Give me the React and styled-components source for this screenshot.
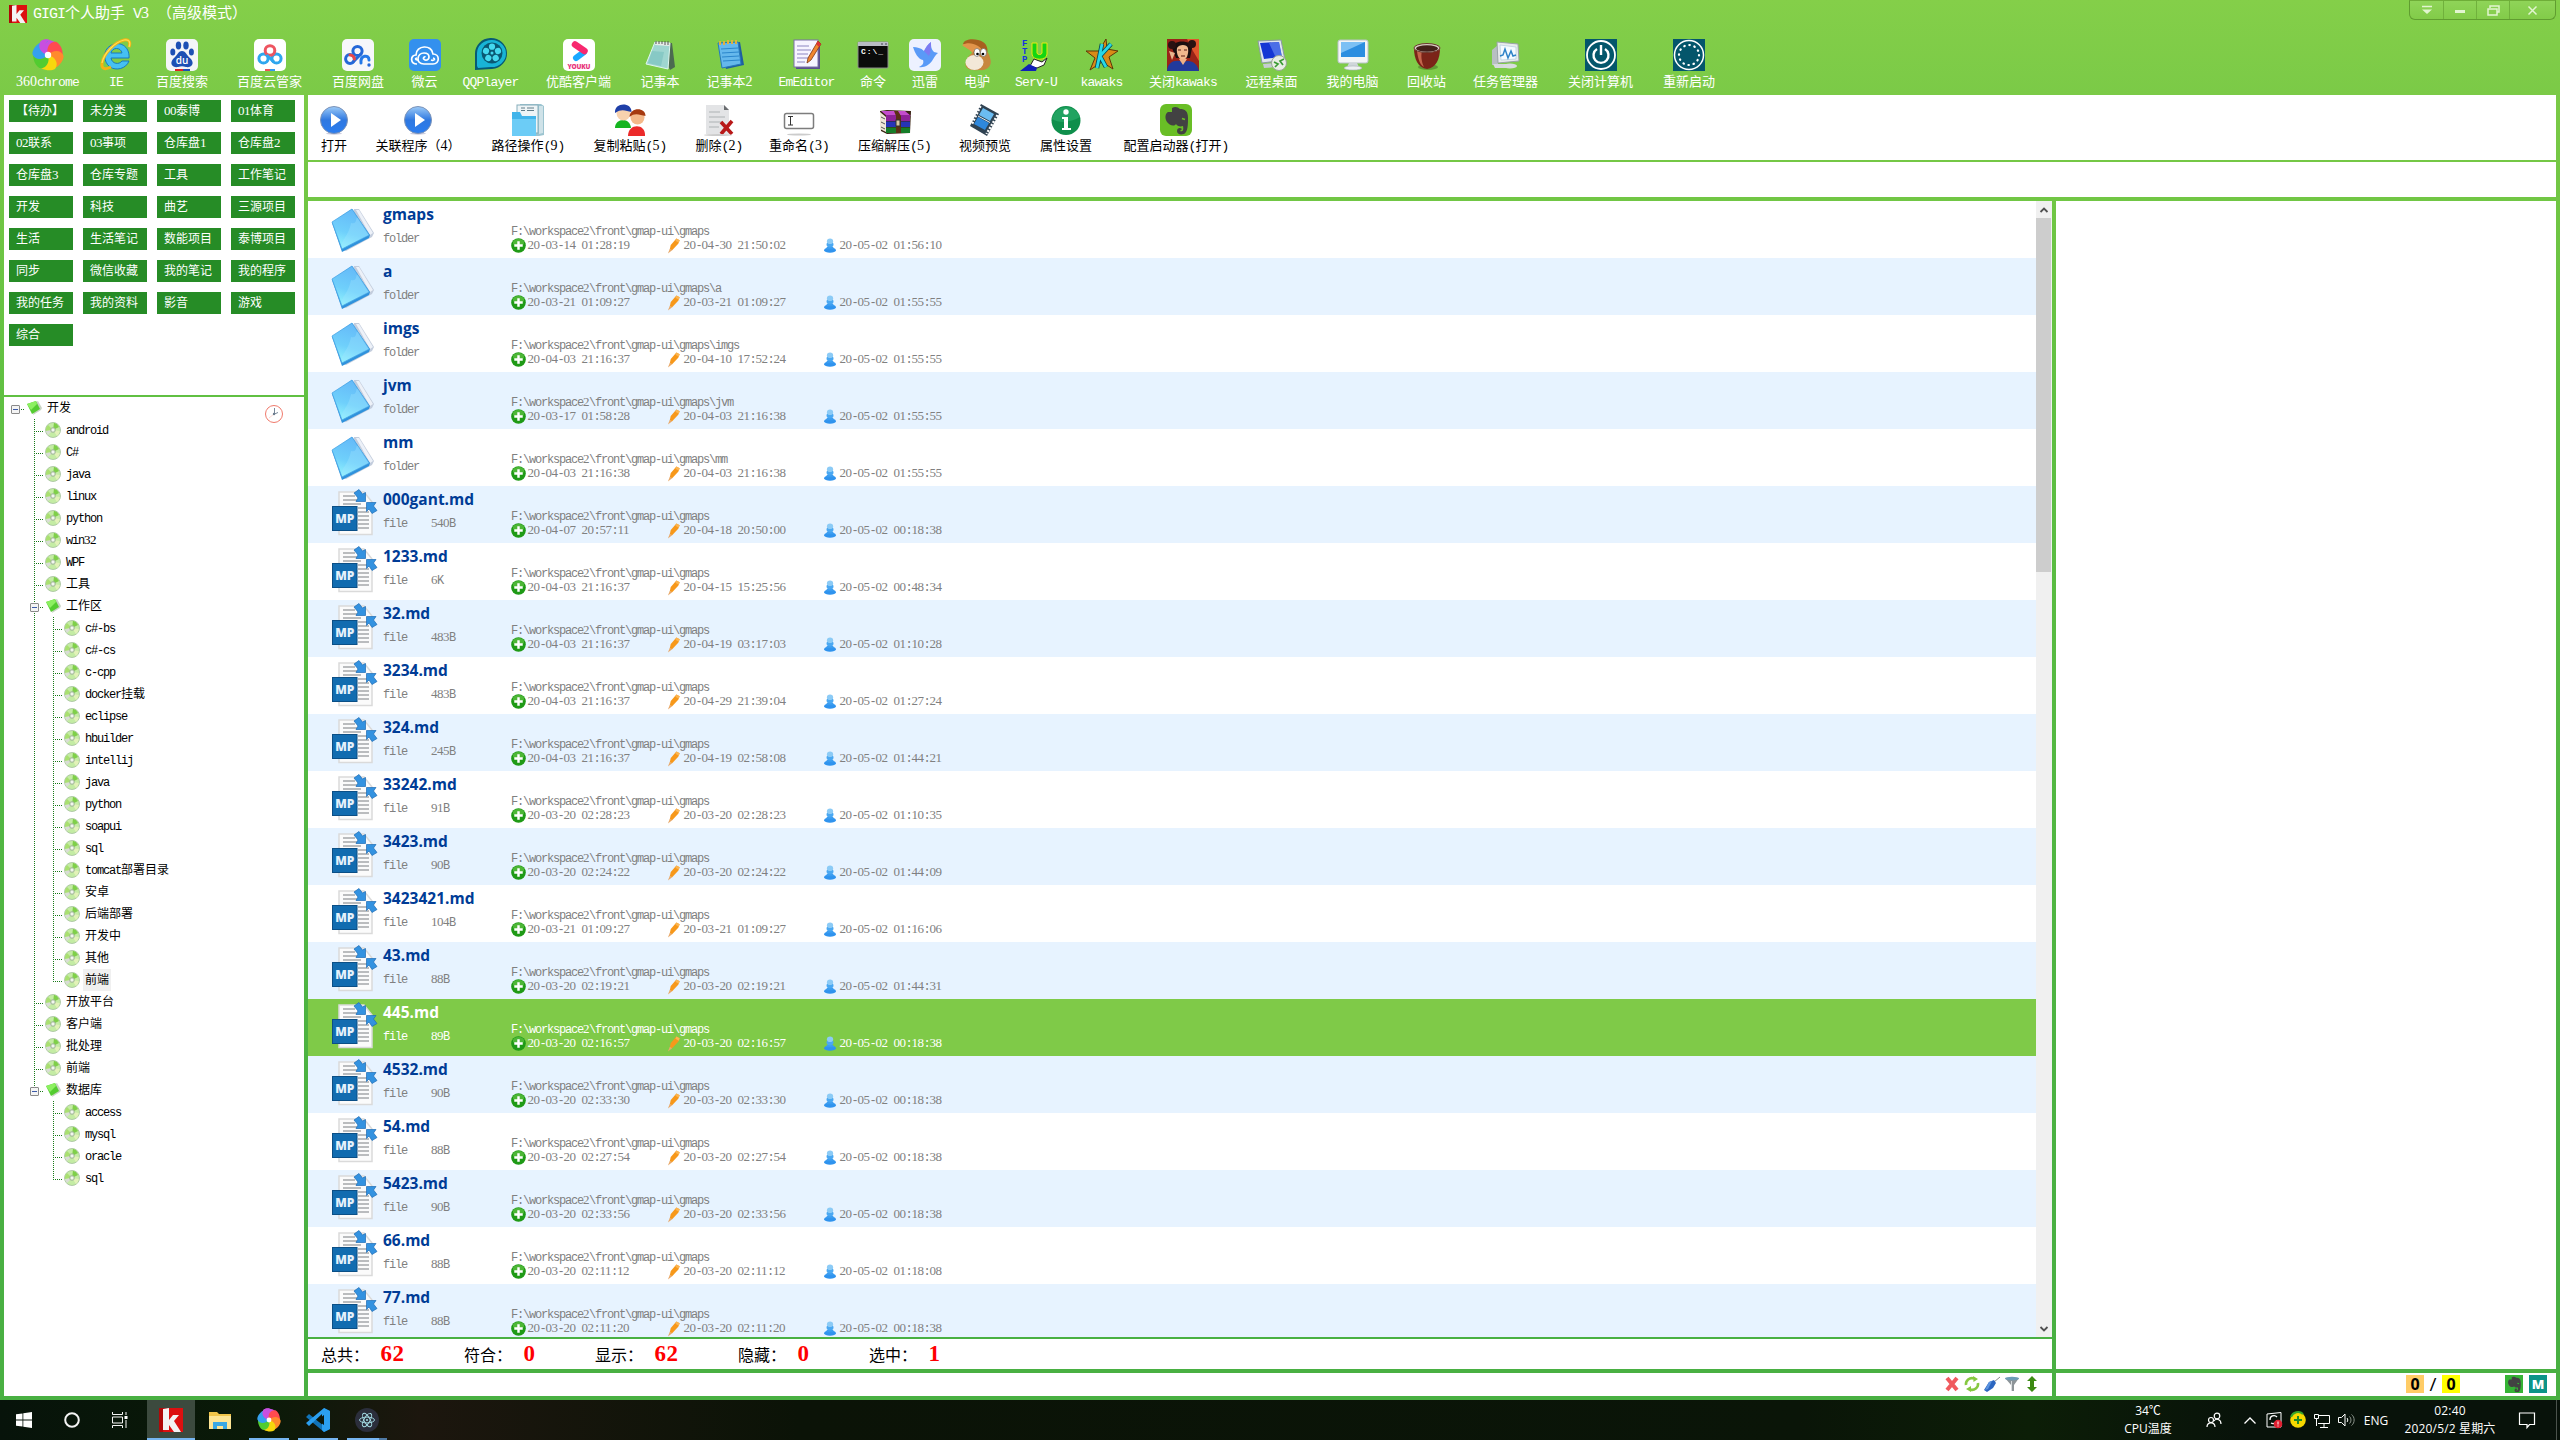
import React from "react";
import styled, { createGlobalStyle, css } from "styled-components";

const Global = createGlobalStyle`
  * { box-sizing: border-box; }
  html, body { margin: 0; padding: 0; }
  body { width: 2560px; height: 1440px; overflow: hidden; background: #071108; }
  svg { display: block; flex: none; overflow: visible; }
`;

const song = css`font-family: "Liberation Mono", "Noto Sans CJK SC", monospace;`;
const ui = css`font-family: "Open Sans", "Noto Sans CJK SC", sans-serif;`;

const Half = styled.span`letter-spacing: ${(p) => p.$ls}px;`;
const Digits = styled.span`font-family: "Liberation Serif", serif; font-size: ${(p) => p.$fs}px; line-height: 1; letter-spacing: ${(p) => p.$ls}px;`;
const LS = { 12: -1.2, 13: -0.8, 15: -1 };
const DIGIT_LS = { 12: -0.5, 13: 0, 15: 0 };
const Mixed = ({ size = 12, children }) =>
  String(children).split(/([0-9]+|[\x20-\x2f\x3a-\x7e]+)/).filter(Boolean).map((s, i) => {
    if (/[0-9]/.test(s[0])) return <Digits key={i} $fs={size + 1} $ls={DIGIT_LS[size]}>{s}</Digits>;
    if (/[\x20-\x7e]/.test(s[0])) return <Half key={i} $ls={LS[size]}>{s}</Half>;
    return <React.Fragment key={i}>{s}</React.Fragment>;
  });

/* ---------- icons ---------- */
const I = ({ s = 32, v = 32, w, h, children }) => (
  <svg width={w || s} height={h || s} viewBox={`0 0 ${v} ${v}`}>{children}</svg>
);

const Pinwheel = ({ s = 32 }) => {
  const c = ["#c84fe0", "#ff4b50", "#ff8a2c", "#f7d80d", "#52cc30", "#35a0ee"];
  const petal = "M16 16C8 14 5 7 9 2C14-1 25 1 28 9C21 6 16 9 16 16Z";
  return (
    <I s={s}>
      {c.map((f, i) => <path key={i} transform={`rotate(${i * 60} 16 16)`} d={petal} fill={f} />)}
      <path d="M16 16C8 14 5 7 9 2C11 .5 14 0 17 .5C12 4 12 11 16 16Z" fill={c[0]} />
      <circle cx="16" cy="16" r="3.2" fill="#fff" />
    </I>
  );
};
const IE = () => (
  <I>
    <path d="M29 19H11C12 25 19 26 22 22H29C26 30 16 32 10 28C3 23 3 11 10 7C19 1 30 7 29 19ZM11 14H22C21 8 12 8 11 14Z" fill="#45c0f2" stroke="#1878c0" strokeWidth="1" />
    <path d="M29 8C31 3 29 0 24 1C15 3 4 14 2 24C1 30 5 31 11 28" fill="none" stroke="#f2b414" strokeWidth="3" />
    <path d="M29 8C31 3 29 0 24 1C15 3 4 14 2 24" fill="none" stroke="#fde25a" strokeWidth="1.2" />
  </I>
);
const Tile = ({ fill = "#fff", children }) => (
  <I><rect width="32" height="32" rx="5" fill={fill} />{children}</I>
);
const BaiduPaw = () => (
  <Tile fill="#f4f5f8">
    <g fill="#1d50b4">
      <ellipse cx="12.5" cy="6.5" rx="2.7" ry="4" /><ellipse cx="20" cy="6.5" rx="2.7" ry="4" />
      <ellipse cx="6.8" cy="13" rx="2.5" ry="3.6" /><ellipse cx="25.4" cy="13" rx="2.5" ry="3.6" />
      <path d="M16 12C20 12 21 17 25 20C29 25 25 29 20 28C17 27 15 27 12 28C7 29 3 25 7 20C11 17 12 12 16 12Z" />
    </g>
    <text x="16" y="25" fontSize="10" textAnchor="middle" fill="#fff" fontFamily="Open Sans, sans-serif" fontWeight="600">du</text>
    <rect x="9" y="30" width="8" height="2" fill="#d22" /><rect x="17" y="30" width="7" height="2" fill="#1d50b4" />
  </Tile>
);
const BaiduCloud = () => (
  <Tile>
    <g fill="none" strokeWidth="3">
      <circle cx="9.5" cy="19.5" r="4.6" stroke="#2fa6ee" /><circle cx="22.5" cy="19.5" r="4.6" stroke="#2fa6ee" />
      <circle cx="16" cy="11.5" r="4.8" stroke="#ee5560" /><path d="M12.5 16L20 23" stroke="#2fa6ee" />
    </g>
    <rect x="11" y="30" width="5" height="2" fill="#e55" /><rect x="16" y="30" width="5" height="2" fill="#39e" />
  </Tile>
);
const BaiduPan = () => (
  <Tile fill="#f6f7fa">
    <g fill="none" strokeWidth="3" strokeLinecap="round">
      <circle cx="8" cy="20" r="4.4" stroke="#2468d8" /><circle cx="15.5" cy="12" r="4.6" stroke="#2468d8" />
      <path d="M19 15L11 23" stroke="#2468d8" /><path d="M19 24C18 16 27 15 27 21" stroke="#2479e8" />
      <path d="M8 16A4.400 4.400 0 0 1 12.400 20" stroke="#ea4646" />
    </g>
    <circle cx="27" cy="26" r="1.700" fill="#2468d8" />
  </Tile>
);
const Weiyun = () => (
  <Tile fill="#3390ee">
    <g fill="none" stroke="#fff" strokeWidth="1.700">
      <path d="M8 25C1 25 1 16 7 16C7 6 23 5 24 15C31 15 31 25 24 25H15C6 25 8 14 15 14C22 14 21 22 16 21C13 20 15 17 16.500 18" />
      <path d="M9 21C6 21 6 19 8 19M24 19C27 20 25 22 22 21" />
    </g>
  </Tile>
);
const QQPlayer = () => (
  <I>
    <path d="M0 31V15A16 15.500 0 1 1 17 30Z" fill="#075a75" />
    <path d="M2 27V14A14.500 13.500 0 1 1 16 28L3 29Z" fill="#18b4d6" />
    <circle cx="17" cy="14" r="10.500" fill="#0a5873" />
    {[0, 72, 144, 216, 288].map((a) => <circle key={a} cx="17" cy="7.700" r="3.100" fill="#45d8ef" transform={`rotate(${a} 17 14)`} />)}
    <circle cx="17" cy="14" r="1.500" fill="#45d8ef" />
  </I>
);
const Youku = () => (
  <Tile>
    <path d="M13 19L21 13" stroke="#18a8ff" strokeWidth="6" strokeLinecap="round" />
    <path d="M12 5.500L21.500 12" stroke="#f8286f" strokeWidth="6.500" strokeLinecap="round" />
    <text x="16" y="29.500" fontSize="6.500" textAnchor="middle" fill="#e8357c" fontFamily="Open Sans, sans-serif" fontWeight="800" textLength="23">YOUKU</text>
  </Tile>
);
const Notepad = () => (
  <I>
    <path d="M12 3L28 4L31 28L26 31Z" fill="#4b6a50" />
    <path d="M11 3L26 4L24 30L2 25Z" fill="#9fd6d0" stroke="#dff5ee" />
    <path d="M12 3L26 4L25.500 7L11 6Z" fill="#e8ece8" />
    <path d="M12 2V5M15 2V5M18 2V5M21 2V6M24 2V6" stroke="#555" />
    <path d="M8 12L20 13L17 27L4 24Z" fill="#6fbcb9" opacity=".5" />
  </I>
);
const Notepad2 = () => (
  <I>
    <path d="M6 4L26 3L30 26L12 30Z" fill="#1f5fa0" />
    <path d="M4 4L24 3L27 25L8 29Z" fill="#65b8ec" stroke="#2679ba" />
    <path d="M7 10L24 9M8 14L25 13M8 18L25 17M9 22L26 21" stroke="#2a86cc" />
    <path d="M6 2V6M10 2V6M14 1V5M18 1V5M22 1V5" stroke="#e0b040" strokeWidth="2" />
  </I>
);
const EmEditor = () => (
  <I>
    <rect x="5" y="3" width="24" height="27" fill="#5a4f8c" /><rect x="3" y="1" width="24" height="27" fill="#f6f4ff" stroke="#7a70a8" />
    <path d="M6 7H18M6 11H20M6 15H17M6 19H18M6 23H14" stroke="#8c86c0" />
    <path d="M27 2L30 5L20 21L16 24L17 19Z" fill="#f1872e" stroke="#7c3410" strokeWidth=".8" /><path d="M27 2L30 5L28 8L25 5Z" fill="#d33" />
  </I>
);
const Cmd = () => (
  <I>
    <rect x="1" y="3" width="30" height="26" rx="1" fill="#0b0b0b" stroke="#8b8b8b" /><rect x="1" y="3" width="30" height="4" fill="#b9bcc4" />
    <path d="M24 5H26M28 5H30" stroke="#445" />
    <text x="4" y="15" fontSize="8" fill="#fff" fontFamily="Liberation Mono, monospace" fontWeight="700" textLength="22">C:\_</text>
  </I>
);
const Xunlei = () => (
  <Tile fill="#edf1ff">
    <path d="M4 8C8 8 12 9 15 12C17 8 19 5 22 3C22 7 22 10 25 13L29 14C26 16 25 19 23 22C20 26 15 29 10 28C14 26 15 24 14 21C9 20 6 14 4 8Z" fill="#5a9af7" />
    <path d="M15 12C17 8 19 5 22 3C22 8 22 12 20 17Z" fill="#8c6df0" opacity=".7" />
  </Tile>
);
const Donkey = () => (
  <I>
    <path d="M2 5C3-1 16-1 22 3C27 6 27 12 26 16L17 15C15 8 9 8 2 5Z" fill="#a8601f" />
    <path d="M1 6C8 2 19 5 23 14L13 17C11 11 6 10 1 6Z" fill="#e2944a" />
    <path d="M13 12C18 8 28 10 29 19C32 27 26 32 18 31C8 32 3 29 5 23C6 18 9 16 13 12Z" fill="#c7873f" />
    <ellipse cx="13.500" cy="23.500" rx="9" ry="7.500" fill="#f3e8d8" />
    <ellipse cx="16" cy="13.500" rx="3" ry="4" fill="#fff" stroke="#555" strokeWidth=".6" /><ellipse cx="22.500" cy="13.500" rx="3" ry="4" fill="#fff" stroke="#555" strokeWidth=".6" />
    <circle cx="16.500" cy="15" r="1.300" /><circle cx="22" cy="15" r="1.300" />
  </I>
);
const ServU = () => (
  <I>
    <g fontFamily="Liberation Mono, monospace" fontWeight="700" fontSize="9" fill="#1433e0">
      <text x="2" y="7">F</text><text x="2" y="15">T</text><text x="2" y="23">P</text>
    </g>
    <path d="M12 4H17V14C17 16 22 16 22 14V4H27V15C27 22 12 22 12 15Z" fill="#12d612" stroke="#e8e812" />
    <path d="M10 27L14 20L22 23L27 19L24 26L17 29Z" fill="#fff" stroke="#222" /><path d="M0 32L9 25L17 29L16 32Z" fill="#1020b8" />
  </I>
);
const Kawaks = () => (
  <I>
    <path d="M20 0L21 10L32 12L23 18L27 30L16 23L4 31L9 19L0 12H13Z" fill="#d98b16" stroke="#5f3608" />
    <path d="M16 5L11 29M25 5L14 17L20 28" stroke="#064a58" strokeWidth="4.500" fill="none" /><path d="M16 5L11 29M25 5L14 17L20 28" stroke="#28d8e6" strokeWidth="2.800" fill="none" />
  </I>
);
const Fighter = () => (
  <I>
    <rect width="32" height="32" fill="#9a2418" /><path d="M20 0H32V22L26 12Z" fill="#e0562c" />
    <path d="M5 9C5 1 24 0 25 9L23 19H9Z" fill="#1a0f10" /><circle cx="5" cy="6" r="4" fill="#2a1212" /><circle cx="25" cy="5" r="4" fill="#2a1212" />
    <path d="M10 9C12 5 20 5 21 9C22 16 19 21 16 21C12 21 9 15 10 9Z" fill="#f0b98e" />
    <path d="M0 32C1 22 9 20 16 23C24 20 30 24 32 32Z" fill="#223a9c" /><path d="M12 20L16 26L20 20Z" fill="#efb186" /><path d="M11 11H14M17 11H20M14 17H18" stroke="#5a1c12" />
    <path d="M2 12L5 21L8 14Z" fill="#e9b58e" />
  </I>
);
const RemoteDesk = () => (
  <I>
    <path d="M2 2L25 1L29 21L6 24Z" fill="#dfe6ee" stroke="#8c99a6" /><path d="M4 4L23 3L26 18L8 20Z" fill="#1536d4" /><path d="M13 4L23 3L26 18L20 19Z" fill="#6f95f4" opacity=".6" />
    <path d="M7 25L20 24L21 28L8 29Z" fill="#c5ccd2" /><circle cx="23" cy="24" r="7.500" fill="#e9eee4" stroke="#9aa596" /><path d="M18 23L22 25L19 28M28 20L24 22L27 26" stroke="#3b9a34" strokeWidth="1.700" fill="none" />
  </I>
);
const MyPC = () => (
  <I>
    <rect x="1" y="1" width="30" height="23" rx="2" fill="#f3f5f6" stroke="#b8c2c8" /><rect x="4" y="3" width="24" height="15" fill="#2c8ee0" /><path d="M4 3H28L4 14Z" fill="#7cc0f4" />
    <path d="M12 24H20L22 28H10Z" fill="#cfd6da" /><ellipse cx="16" cy="29" rx="9" ry="2" fill="#eef1f2" stroke="#aab4b8" strokeWidth=".6" />
  </I>
);
const Bin = () => (
  <I>
    <ellipse cx="17" cy="28" rx="10" ry="3" fill="#4f7a28" opacity=".6" /><path d="M3 9C3 20 7 29 16 30C25 29 29 20 29 9Z" fill="#7b2418" />
    <path d="M6 12C7 20 9 26 13 28C10 22 10 15 11 12Z" fill="#c4664c" /><ellipse cx="16" cy="9" rx="13" ry="4.500" fill="#d8ccc4" stroke="#6b3a2e" /><ellipse cx="16" cy="9.500" rx="11" ry="3.300" fill="#43201a" />
  </I>
);
const TaskMgr = () => (
  <I>
    <path d="M2 11L8 6V26L2 26Z" fill="#b8bfc2" /><path d="M3 25H17V29H5Z" fill="#d6dadc" /><path d="M7 3L28 5L29 22L8 24Z" fill="#e8ebed" stroke="#9aa3a8" /><path d="M10 6L26 8L26 20L11 21Z" fill="#f5fbff" stroke="#a8c6d8" strokeWidth=".6" />
    <path d="M10 17L13 16L15 10L18 19L21 12L23 17L26 16" stroke="#2c82c8" strokeWidth="1.500" fill="none" /><ellipse cx="20" cy="27" rx="7" ry="2.500" fill="#d9dddf" />
  </I>
);
const Power = () => (
  <I><rect width="32" height="32" fill="#04566b" /><g fill="none" stroke="#fff"><circle cx="16" cy="16" r="14" strokeWidth="1.800" /><path d="M12 10A7.500 7.500 0 1 0 20 10M16 6V16" strokeWidth="2.400" /></g></I>
);
const Restart = () => (
  <I><rect width="32" height="32" fill="#04566b" /><g fill="none" stroke="#fff"><circle cx="16" cy="16" r="14.500" strokeWidth="1.500" /><circle cx="16" cy="16" r="10" strokeWidth="2.200" strokeDasharray="0.5 4.740" strokeLinecap="round" /></g></I>
);
const Logo = ({ w = 18, h = 18 }) => (
  <svg width={w} height={h} viewBox="0 0 24 24"><rect width="24" height="24" fill="#dc1010" /><path d="M0 0H8L4 24H0Z" fill="#b00808" /><path d="M4 1L10 0V12L14 7H20L15 13L22 24H15L10 17V22H4Z" fill="#f3f3f3" /></svg>
);

const Play = () => (
  <I>
    <defs><linearGradient id="pl" x1="0" y1="0" x2="0" y2="1"><stop offset="0" stopColor="#9ccbf8" /><stop offset=".5" stopColor="#2f78e0" /><stop offset="1" stopColor="#2a7df0" /></linearGradient></defs>
    <ellipse cx="16" cy="29.500" rx="8" ry="1.200" fill="#ccd" /><circle cx="16" cy="16" r="13.500" fill="url(#pl)" stroke="#7c93b8" /><path d="M13 9L23 16L13 23Z" fill="#fff" />
  </I>
);
const PathOp = () => (
  <I>
    <path d="M8 0H29L32 2V31L27 32H8Z" fill="#9cc4d0" /><path d="M27 2H31V29L27 30Z" fill="#cfe2e8" /><rect x="5" y="1" width="21" height="28" fill="#eef4f6" stroke="#86aebb" /><path d="M9 4H13M15 4H22M9 6.500H13M15 6.500H22" stroke="#607c88" />
    <path d="M0 8H8L10 12H24V32H0Z" fill="#41b4ea" /><path d="M0 15H24V32H0Z" fill="#6cccf6" />
  </I>
);
const People = () => (
  <I>
    <path d="M1 24C1 14 16 13 17 24Z" fill="#15b520" /><ellipse cx="9.500" cy="9" rx="7" ry="7.500" fill="#f8d2ae" /><path d="M1 9C0-2 18-2 17.500 8C12 7 8 4 1 9Z" fill="#1f3fa8" />
    <path d="M14 32C14 19 32 19 31 32Z" fill="#ec2a2a" /><ellipse cx="23.500" cy="13.500" rx="7" ry="7" fill="#f4b98a" /><path d="M15.500 13C16 3 31.500 3 31.500 12C26 11 21 8 15.500 13Z" fill="#a63a10" />
  </I>
);
const Del = () => (
  <I>
    <path d="M3 1H21L26 6V30H3Z" fill="#e3e4e6" /><path d="M21 1L26 6H21Z" fill="#6a6d70" /><path d="M6 8H17M6 13H22M6 18H20M6 23H16" stroke="#c0c2c5" strokeWidth="1.500" />
    <path d="M18 18L29 30M29 17L18 30" stroke="#b81818" strokeWidth="3.600" /><ellipse cx="15" cy="31" rx="14" ry="1" fill="#ccc" />
  </I>
);
const Rename = () => (
  <I><rect x="1.500" y="9.500" width="29" height="15" rx="2" fill="#fff" stroke="#7d7d7d" strokeWidth="1.500" /><path d="M5 12.500H10M7.500 12.500V21M5 21H10" stroke="#333" /><ellipse cx="16" cy="30.500" rx="12" ry="1" fill="#ccc" /></I>
);
const Rar = () => (
  <I>
    <path d="M1 7L8 6L32 7L31 29L8 30L2 27Z" fill="#392312" /><path d="M1 8L7 13V28L1 25Z" fill="#efe7d8" />
    <path d="M2 7H26L32 12H8Z" fill="#c44ccc" /><rect x="7" y="11" width="24" height="6" fill="#8e2298" /><rect x="7" y="17.500" width="24" height="5.500" fill="#2634b8" /><rect x="7" y="23.500" width="24" height="5.500" fill="#167d28" />
    <path d="M15 7H19L22 12V29H17V12Z" fill="#5a3015" /><rect x="17" y="16" width="4" height="6" fill="#d8c8a4" stroke="#333" /><path d="M2 13L6 15M2 18L6 20M2 23L6 25" stroke="#555" />
  </I>
);
const Film = () => (
  <I>
    <path d="M12 0L30 10L18 32L1 22Z" fill="#2f4252" /><path d="M14 4L25 10L21 17L10 11Z" fill="#6bbcf2" /><path d="M9 13L20 19L16 26L5 20Z" fill="#2f88dc" />
    <path d="M11.500 2L2.500 21" stroke="#fff" strokeWidth="2.400" strokeDasharray="2 1.500" /><path d="M28.500 11L17.500 30" stroke="#fff" strokeWidth="2.400" strokeDasharray="2 1.500" /><path d="M9 12L21 18.500" stroke="#e6eef4" />
  </I>
);
const Info = () => (
  <I><circle cx="16" cy="16.500" r="14.500" fill="#0f8f4c" /><path d="M2 15A14.500 14.500 0 0 1 30 13C22 18 10 20 2 15Z" fill="#2db070" opacity=".6" /><circle cx="16" cy="8" r="2.700" fill="#fff" /><path d="M12 13H18V24H21V26H12V24H14V15H12Z" fill="#fff" /></I>
);
const Elephant = ({ s = 32, bg = "#69be26", r = 6 }) => (
  <I s={s}><rect width="32" height="32" rx={r} fill={bg} />
    <path d="M12 4C15 2 18 3 20 5C25 5 28 7 28 14C28 20 28 28 24 30C20 31 17 30 17 27C17 24 20 23 22 25L20 27C22 28 24 27 23 22C20 23 17 22 16 20C14 23 9 21 7 18C4 13 6 9 8 8L12 8Z" fill="#424242" />
    <path d="M22 14.500L25 15.500" stroke={bg} strokeWidth="1.800" />
  </I>
);

const FolderBig = () => (
  <svg width="46" height="44" viewBox="0 0 46 44">
    <defs><linearGradient id="fb" x1=".6" y1="0" x2=".3" y2="1"><stop offset="0" stopColor="#64b8f8" /><stop offset=".6" stopColor="#6fd0fb" /><stop offset="1" stopColor="#93f4fd" /></linearGradient></defs>
    <path d="M24 0L29 0L44 24L42 28L16 42L13 41Z" fill="#c3cddd" /><path d="M26 1L29 1L43 24L40 26Z" fill="#edf1f8" />
    <path d="M2 14L22 0L40 26L39 29L12 43Z" fill="#2f92dc" /><path d="M2 13L22 0L39 26L12 40Z" fill="url(#fb)" stroke="#4aa6e6" strokeWidth=".8" />
    <path d="M21 14C28 16 25 7 28 9L39 26L12 39C10 31 18 29 21 14Z" fill="#a6e6ff" opacity=".32" />
  </svg>
);
const MdFile = () => (
  <svg width="46" height="48" viewBox="0 0 46 48">
    <path d="M8 3H33L41 13V45.500H8Z" fill="#fbfbfb" stroke="#dadada" strokeWidth="1.500" />
    <path d="M12 7H24M12 11H26M12 15H30M27 19H38M27 23H38M27 27H38M27 31H38M27 35H38M27 39H38" stroke="#a5a8aa" strokeWidth="1.600" />
    <rect x="1.500" y="17.500" width="24.500" height="24" fill="#126cb0" stroke="#0b4f86" />
    <text x="13.800" y="34" fontSize="12" textAnchor="middle" fill="#e4f1fb" fontFamily="Open Sans, sans-serif" fontWeight="800" textLength="19">MP</text>
    <path d="M23 4L28 .500L31.500 5L34.500 3.500V12.500H25L27 9Z" fill="#3392e0" stroke="#1c6cb4" strokeWidth=".7" />
    <path d="M35.500 13.500H45L42.500 17L46 21.500L41 24.500L38 20L35.500 22.500Z" fill="#3392e0" stroke="#1c6cb4" strokeWidth=".7" />
  </svg>
);
const Plus = () => (
  <I s={15} v={16}><circle cx="8" cy="8" r="7.800" fill="#1f9a16" /><ellipse cx="8" cy="5" rx="6" ry="4" fill="#6ccc4c" opacity=".6" /><path d="M8 3.500V12.500M3.500 8H12.500" stroke="#fff" strokeWidth="2.600" /></I>
);
const Pencil = () => (
  <I s={15} v={16}><path d="M10 .500L13.500 2.500L12 6L5.500 13L3 12L4 7.500Z" fill="#f7981a" /><path d="M10 .500L13.500 2.500L12.500 5L9 3Z" fill="#fbb552" /><path d="M3 11.500L5.500 13L1 16.500Z" fill="#e8a868" /></I>
);
const Visitor = () => (
  <I s={15} v={16}><ellipse cx="7.500" cy="13" rx="6.300" ry="2.800" fill="#2f93ee" /><path d="M3 12C4 7 11 7 12 12Z" fill="#3a9cf0" /><ellipse cx="7.500" cy="7" rx="3.700" ry="3" fill="#4aa8f2" /><ellipse cx="7.500" cy="3.500" rx="3.300" ry="3" fill="#8ccbf6" /></I>
);
const Disc = () => (
  <I s={16} v={16}><circle cx="8" cy="8" r="7.500" fill="#c4ecA4" stroke="#a3bf9c" strokeWidth=".8" /><path d="M8 8L9 .8A7 7 0 0 1 14 5Z" fill="#7fcf4a" /><path d="M8 8L1 9A7 7 0 0 1 3 3Z" fill="#a9e070" /><path d="M8 8L3 13A7 7 0 0 1 1 9Z" fill="#d9dcd6" /><path d="M8 8L14.800 9A7 7 0 0 1 12 14Z" fill="#e2f2b8" /><circle cx="8" cy="8" r="2.400" fill="#d6e4cf" stroke="#93a88c" strokeWidth=".7" /><circle cx="8" cy="8" r=".9" fill="#fff" /></I>
);
const Book = () => (
  <I s={16} v={16}><path d="M10 2L12 1L16 8L15 10L7 15Z" fill="#c9d4c4" /><path d="M1 4L10 1L14 9L6 14Z" fill="#54cc30" /><path d="M1 4L10 1L11 4L5 10Z" fill="#8cf060" /></I>
);
const Clock = () => (
  <I s={20} v={20}><circle cx="10" cy="10" r="8.500" fill="#fff" stroke="#f07a6c" /><path d="M10.500 4V10L14 8.500" stroke="#7a8a9a" fill="none" /><path d="M10 10L5 14" stroke="#f6c8c0" strokeWidth=".7" /><circle cx="10" cy="10" r="1.200" fill="#6a7a8c" /></I>
);

/* ---------- window shell ---------- */
const Screen = styled.div`
  ${song} width: 2560px; height: 1440px; display: flex; flex-direction: column; font-size: 12px; color: #000; overflow: hidden;
`;
const Window = styled.div`
  height: 1400px; display: flex; flex-direction: column; padding: 0 4px 4px;
  background: linear-gradient(#84cf49 0, #7bca47 95px, #70c644 210px, #60c042 400px, #52b742 800px, #49b042 1200px, #49b042 1400px);
`;
const Header = styled.header`height: 95px; display: flex; flex-direction: column; margin: 0 -4px;`;
const TitleBar = styled.div`height: 39px; display: flex; justify-content: space-between; padding: 0 4px 0 9px;`;
const Title = styled.div`
  display: flex; gap: 6px; padding-top: 5px; height: 24px; color: #fff; font-size: 15px; line-height: 18px; white-space: pre;
`;
const Caption = styled.div`
  display: flex; width: 147px; height: 20px; border: 1px solid #609d30; border-top-color: #6fae38; border-radius: 0 0 6px 6px; background: linear-gradient(#8fd458, #82cb49);
`;
const CaptionBtn = styled.div`
  width: ${(p) => p.$w}px; display: flex; align-items: center; justify-content: center;
  & + & { border-left: 1px solid #70b13c; }
`;
const Launcher = styled.nav`display: flex; height: 56px;`;
const Tool = styled.div`
  width: ${(p) => p.$w}px; margin-left: ${(p) => p.$gap}px; display: flex; flex-direction: column; align-items: center; flex: none;
`;
const ToolLabel = styled.span`
  font-size: 13px; line-height: 18px; height: 18px; margin-top: ${(p) => (p.$dark ? 2 : 3)}px; white-space: nowrap; color: ${(p) => (p.$dark ? "#000" : "#fff")};
`;

const Body = styled.div`flex: 1; min-height: 0; display: flex; gap: 4px;`;
const Side = styled.aside`width: 300px; display: flex; flex-direction: column; gap: 2px;`;
const Tags = styled.div`
  height: 300px; background: #fff; padding: 5px 0 0 5px; display: grid; grid-template-columns: repeat(4, 64px); grid-auto-rows: 22px; gap: 10px; align-content: start;
`;
const Tag = styled.div`background: #268c26; color: #fff; height: 22px; padding-left: 7px; line-height: 24px; white-space: nowrap;`;
const Tree = styled.div`flex: 1; background: #fff; position: relative; padding-left: 2px;`;
const TreeRow = styled.div`height: 22px; display: flex; align-items: center;`;
const dotsV = "repeating-linear-gradient(180deg, #187a18 0 1px, transparent 1px 2px)";
const dotsH = "repeating-linear-gradient(90deg, #187a18 0 1px, transparent 1px 2px)";
const Guide = styled.div`
  width: 19px; height: 22px; display: flex; align-items: center; justify-content: center; flex: none;
  background-repeat: no-repeat;
  background-image: ${(p) => (p.$v ? dotsV : "none")}, ${(p) => (p.$h ? dotsH : "none")};
  background-position: 9px 0, 9px 12px;
  background-size: 1px ${(p) => (p.$end ? 12 : 22)}px, 11px 1px;
`;
const Toggle = styled.div`
  width: 9px; height: 9px; margin-top: 2px; border: 1px solid #8a8a8a; border-radius: 1px; background: #f4f4f4; display: flex; align-items: center; justify-content: center;
  &::after { content: ""; width: 5px; height: 1px; background: #3c5aa8; }
`;
const NodeIcon = styled.div`width: 16px; margin: 0 3px 0 1px; flex: none;`;
const NodeText = styled.span`padding: 0 2px; height: 22px; line-height: 24px; white-space: nowrap; background: ${(p) => (p.$on ? "#f0f0f0" : "transparent")};`;
const ClockSpot = styled.div`position: absolute; left: 260px; top: 7px;`;

const Main = styled.main`flex: 1; display: flex; flex-direction: column;`;
const Toolbar = styled.div`height: 65px; background: #fff; display: flex; padding-top: 9px; margin-bottom: 2px;`;
const FilterBar = styled.div`height: 35px; background: #fff; margin-bottom: 4px;`;
const Split = styled.div`flex: 1; min-height: 0; display: flex; gap: 4px;`;
const ListCol = styled.section`width: 1744px; display: flex; flex-direction: column;`;
const PreviewCol = styled.section`width: 500px; display: flex; flex-direction: column; gap: 4px;`;
const Preview = styled.div`flex: 1; background: #fff;`;
const ListView = styled.div`height: 1136px; display: flex; background: #fff; overflow: hidden;`;
const Rows = styled.div`flex: 1; overflow: hidden;`;
const Scroll = styled.div`width: 16px; background: #f0f0f0; display: flex; flex-direction: column; align-items: center;`;
const ScrollBtn = styled.div`height: 17px; display: flex; align-items: center;`;
const Thumb = styled.div`width: 15px; height: 354px; background: #cdcdcd; margin-right: 1px; margin-bottom: auto;`;
const Row = styled.div`
  height: 57px; display: flex; color: ${(p) => (p.$sel ? "#fff" : "#808080")};
  background: ${(p) => (p.$sel ? "#7fca48" : p.$alt ? "#e7f3ff" : "#fff")};
`;
const RowIcon = styled.div`width: 75px; padding: ${(p) => (p.$file ? 3 : 8)}px 0 0 ${(p) => (p.$file ? 23 : 22)}px;`;
const RowName = styled.div`width: 128px; padding-top: 2px;`;
const Name = styled.div`${ui} font-size: 15.5px; font-weight: 700; line-height: 22px; white-space: nowrap; color: ${(p) => (p.$sel ? "#fff" : "#003c96")};`;
const Kind = styled.div`display: flex; align-items: baseline; line-height: 16px; height: 16px; margin-top: 6px;`;
const KindType = styled.span`width: 48px;`;
const RowInfo = styled.div`padding-top: 23px;`;
const PathLine = styled.div`line-height: 15px; height: 14px; white-space: nowrap;`;
const Dates = styled.div`display: flex; align-items: flex-start;`;
const DateCell = styled.div`width: 156px; height: 16px; display: flex; gap: 1.5px; line-height: 16px; white-space: nowrap;`;
const Status = styled.div`
  height: 30px; margin: 2px 0 4px; background: #fff; display: flex; align-items: center; gap: 59.5px; padding-left: 13px; font-size: 16px; white-space: nowrap;
`;
const Stat = styled.div`display: flex; align-items: center; gap: 11.5px;`;
const StatLabel = styled.span`width: 48px;`;
const StatNum = styled.b`font-family: "Liberation Serif", serif; font-size: 23px; line-height: 30px; letter-spacing: .5px; color: #f00;`;
const FootBar = styled.div`height: 23px; flex: none; background: #fff; display: flex; align-items: center; justify-content: flex-end; gap: ${(p) => p.$gap || 0}px; padding-right: ${(p) => p.$pr}px; padding-bottom: 2px;`;
const Count = styled.div`${ui} width: 18px; height: 18px; line-height: 18px; font-size: 16px; font-weight: 700; text-align: center; background: ${(p) => p.$bg};`;
const Slash = styled.span`${ui} width: 18px; text-align: center; font-size: 19px; line-height: 18px;`;
const Shortcuts = styled.div`display: flex; gap: 6px; margin-left: 45px;`;
const MBadge = styled.div`${ui} width: 18px; height: 18px; background: #0c9488; color: #fff; font-size: 13px; font-weight: 800; line-height: 18px; text-align: center;`;

/* ---------- taskbar ---------- */
const Taskbar = styled.footer`
  ${ui} height: 40px; color: #fff; font-size: 12px; display: flex; justify-content: space-between;
  background: linear-gradient(90deg, #07130a 0, #0a1a08 260px, #1c160e 420px, #0b1307 800px, #0a1508 1800px, #0c1e07 2030px, #08120a 2250px, #08120a 100%);
`;
const TaskLeft = styled.div`display: flex;`;
const TaskBtn = styled.div`
  width: ${(p) => p.$w}px; margin-left: ${(p) => p.$ml || 0}px; height: 40px; display: flex; align-items: center; justify-content: center; position: relative;
  background: ${(p) => (p.$on ? "#3c4a3e" : "transparent")};
`;
const Running = styled.i`
  position: absolute; left: ${(p) => p.$l}px; bottom: 0; height: 2px; width: ${(p) => p.$w}px; background: ${(p) => (p.$dim ? "#4f7aa4" : "#76b5f0")};
`;
const Tray = styled.div`display: flex; align-items: center;`;
const TrayItem = styled.div`width: ${(p) => p.$w}px; display: flex; justify-content: center; white-space: nowrap;`;
const TwoLines = styled.div`width: ${(p) => p.$w}px; text-align: center; line-height: 18px; white-space: nowrap; letter-spacing: ${(p) => p.$ls || 0}px;`;
const PeekEdge = styled.div`width: 4px; height: 40px; margin-left: 9px; border-left: 1px solid #4b534c;`;

/* ---------- data ---------- */
const launch = [
  ["360chrome", 63, 16, Pinwheel], ["IE", 14, 30, IE], ["百度搜索", 52, 33, BaiduPaw], ["百度云管家", 65, 29, BaiduCloud],
  ["百度网盘", 52, 30, BaiduPan], ["微云", 26, 27.5, Weiyun], ["QQPlayer", 56, 25, QQPlayer], ["优酷客户端", 65, 27.5, Youku],
  ["记事本", 39, 29.5, Notepad], ["记事本2", 46, 27, Notepad2], ["EmEditor", 56, 26, EmEditor], ["命令", 26, 25.5, Cmd],
  ["迅雷", 26, 26, Xunlei], ["电驴", 26, 26, Donkey], ["Serv-U", 42, 25, ServU], ["kawaks", 42, 23.5, Kawaks],
  ["关闭kawaks", 68, 26.5, Fighter], ["远程桌面", 52, 28.5, RemoteDesk], ["我的电脑", 52, 29, MyPC], ["回收站", 39, 28.5, Bin],
  ["任务管理器", 65, 27, TaskMgr], ["关闭计算机", 65, 30, Power], ["重新启动", 52, 30, Restart],
];
const tools = [
  ["打开", 26, 13, Play], ["关联程序（4）", 85, 28.5, Play], ["路径操作(9)", 73, 31, PathOp], ["复制粘贴(5)", 73, 29, People],
  ["删除(2)", 47, 29, Del], ["重命名(3)", 60, 26.5, Rename], ["压缩解压(5)", 73, 29, Rar], ["视频预览", 52, 28, Film],
  ["属性设置", 52, 29, Info], ["配置启动器(打开)", 105, 31.5, Elephant],
];
const tags = "【待办】,未分类,00泰博,01体育,02联系,03事项,仓库盘1,仓库盘2,仓库盘3,仓库专题,工具,工作笔记,开发,科技,曲艺,三源项目,生活,生活笔记,数能项目,泰博项目,同步,微信收藏,我的笔记,我的程序,我的任务,我的资料,影音,游戏,综合".split(",");
const leafs = (lv, names) => names.split(",").map((n) => ({ lv, n }));
const tree = [
  { lv: 0, n: "开发", open: true },
  ...leafs(1, "android,C#,java,linux,python,win32,WPF,工具"),
  { lv: 1, n: "工作区", open: true },
  ...leafs(2, "c#-bs,c#-cs,c-cpp,docker挂载,eclipse,hbuilder,intellij,java,python,soapui,sql,tomcat部署目录,安卓,后端部署,开发中,其他"),
  { lv: 2, n: "前端", on: true, end: true },
  ...leafs(1, "开放平台,客户端,批处理,前端"),
  { lv: 1, n: "数据库", open: true, end: true },
  ...leafs(2, "access,mysql,oracle").map((t) => ({ ...t, last: true })),
  { lv: 2, n: "sql", end: true, last: true },
];
const files = [
  ["gmaps", "", "20-03-14 01:28:19", "20-04-30 21:50:02", "20-05-02 01:56:10", ""],
  ["a", "", "20-03-21 01:09:27", "20-03-21 01:09:27", "20-05-02 01:55:55", "\\a"],
  ["imgs", "", "20-04-03 21:16:37", "20-04-10 17:52:24", "20-05-02 01:55:55", "\\imgs"],
  ["jvm", "", "20-03-17 01:58:28", "20-04-03 21:16:38", "20-05-02 01:55:55", "\\jvm"],
  ["mm", "", "20-04-03 21:16:38", "20-04-03 21:16:38", "20-05-02 01:55:55", "\\mm"],
  ["000gant.md", "540B", "20-04-07 20:57:11", "20-04-18 20:50:00", "20-05-02 00:18:38", ""],
  ["1233.md", "6K", "20-04-03 21:16:37", "20-04-15 15:25:56", "20-05-02 00:48:34", ""],
  ["32.md", "483B", "20-04-03 21:16:37", "20-04-19 03:17:03", "20-05-02 01:10:28", ""],
  ["3234.md", "483B", "20-04-03 21:16:37", "20-04-29 21:39:04", "20-05-02 01:27:24", ""],
  ["324.md", "245B", "20-04-03 21:16:37", "20-04-19 02:58:08", "20-05-02 01:44:21", ""],
  ["33242.md", "91B", "20-03-20 02:28:23", "20-03-20 02:28:23", "20-05-02 01:10:35", ""],
  ["3423.md", "90B", "20-03-20 02:24:22", "20-03-20 02:24:22", "20-05-02 01:44:09", ""],
  ["3423421.md", "104B", "20-03-21 01:09:27", "20-03-21 01:09:27", "20-05-02 01:16:06", ""],
  ["43.md", "88B", "20-03-20 02:19:21", "20-03-20 02:19:21", "20-05-02 01:44:31", ""],
  ["445.md", "89B", "20-03-20 02:16:57", "20-03-20 02:16:57", "20-05-02 00:18:38", ""],
  ["4532.md", "90B", "20-03-20 02:33:30", "20-03-20 02:33:30", "20-05-02 00:18:38", ""],
  ["54.md", "88B", "20-03-20 02:27:54", "20-03-20 02:27:54", "20-05-02 00:18:38", ""],
  ["5423.md", "90B", "20-03-20 02:33:56", "20-03-20 02:33:56", "20-05-02 00:18:38", ""],
  ["66.md", "88B", "20-03-20 02:11:12", "20-03-20 02:11:12", "20-05-02 01:18:08", ""],
  ["77.md", "88B", "20-03-20 02:11:20", "20-03-20 02:11:20", "20-05-02 00:18:38", ""],
];
const stats = [["总共：", 62], ["符合：", 0], ["显示：", 62], ["隐藏：", 0], ["选中：", 1]];

const ToolStrip = ({ items, dark }) => items.map(([label, w, gap, Icon]) => (
  <Tool key={label} $w={w} $gap={gap}><Icon /><ToolLabel $dark={dark}><Mixed size={13}>{label}</Mixed></ToolLabel></Tool>
));

const Node = ({ lv, n, open, end, on, last }) => (
  <TreeRow>
    {lv > 0 && <Guide />}
    {lv === 2 && <Guide $v={!last} />}
    {open
      ? <Guide $v={lv > 0} $h $end={end}><Toggle /></Guide>
      : <Guide $v $h $end={end} />}
    <NodeIcon>{open ? <Book /> : <Disc />}</NodeIcon>
    <NodeText $on={on}><Mixed>{n}</Mixed></NodeText>
  </TreeRow>
);

const FileRow = ({ f, i }) => {
  const sel = i === 14;
  const file = f[1] !== "";
  return (
    <Row $sel={sel} $alt={i % 2 === 1}>
      <RowIcon $file={file}>{file ? <MdFile /> : <FolderBig />}</RowIcon>
      <RowName>
        <Name $sel={sel}>{f[0]}</Name>
        <Kind><KindType><Mixed>{file ? "file" : "folder"}</Mixed></KindType>{file && <span><Mixed>{f[1]}</Mixed></span>}</Kind>
      </RowName>
      <RowInfo>
        <PathLine><Mixed>{"F:\\workspace2\\front\\gmap-ui\\gmaps" + f[5]}</Mixed></PathLine>
        <Dates>
          <DateCell><Plus /><span><Mixed>{f[2]}</Mixed></span></DateCell>
          <DateCell><Pencil /><span><Mixed>{f[3]}</Mixed></span></DateCell>
          <DateCell><Visitor /><span><Mixed>{f[4]}</Mixed></span></DateCell>
        </Dates>
      </RowInfo>
    </Row>
  );
};

export default function App() {
  return (
    <Screen>
      <Global />
      <Window>
        <Header>
          <TitleBar>
            <Title><Logo /><span><Mixed size={15}>GIGI个人助手 V3 （高级模式）</Mixed></span></Title>
            <Caption>
              <CaptionBtn $w={33}><svg width="10" height="10" viewBox="0 0 10 10"><path d="M0 1.500H10" stroke="#e2f5d0" strokeWidth="1.500" /><path d="M0 4.500H10L5 9Z" fill="#e2f5d0" /></svg></CaptionBtn>
              <CaptionBtn $w={33}><svg width="10" height="4" viewBox="0 0 10 4"><rect y="2" width="10" height="3" fill="#e2f5d0" /></svg></CaptionBtn>
              <CaptionBtn $w={33}><svg width="13" height="11" viewBox="0 0 13 11"><path d="M3 3V1H12V7H10M1 4H10V10H1Z" fill="none" stroke="#e2f5d0" strokeWidth="1.500" /></svg></CaptionBtn>
              <CaptionBtn $w={46}><svg width="9" height="9" viewBox="0 0 9 9"><path d="M.5.5L8.500 8.500M8.500.5L.5 8.500" stroke="#e2f5d0" strokeWidth="1.500" /></svg></CaptionBtn>
            </Caption>
          </TitleBar>
          <Launcher><ToolStrip items={launch} /></Launcher>
        </Header>
        <Body>
          <Side>
            <Tags>{tags.map((t) => <Tag key={t}><Mixed>{t}</Mixed></Tag>)}</Tags>
            <Tree>
              {tree.map((t, i) => <Node key={i} {...t} />)}
              <ClockSpot><Clock /></ClockSpot>
            </Tree>
          </Side>
          <Main>
            <Toolbar><ToolStrip items={tools} dark /></Toolbar>
            <FilterBar />
            <Split>
              <ListCol>
                <ListView>
                  <Rows>{files.map((f, i) => <FileRow key={f[0]} f={f} i={i} />)}</Rows>
                  <Scroll>
                    <ScrollBtn><svg width="8" height="6" viewBox="0 0 8 6"><path d="M.5 5L4 1.500L7.500 5" fill="none" stroke="#505050" strokeWidth="1.800" /></svg></ScrollBtn>
                    <Thumb />
                    <ScrollBtn><svg width="8" height="6" viewBox="0 0 8 6"><path d="M.5 1L4 4.500L7.500 1" fill="none" stroke="#505050" strokeWidth="1.800" /></svg></ScrollBtn>
                  </Scroll>
                </ListView>
                <Status>{stats.map(([l, n]) => <Stat key={l}><StatLabel>{l}</StatLabel><StatNum>{n}</StatNum></Stat>)}</Status>
                <FootBar $pr={12} $gap={4}>
                  <I s={16} v={16}><path d="M3 2L13 14M13 2L3 14" stroke="#f05a5e" strokeWidth="4" /></I>
                  <I s={16} v={16}><path d="M2 9A6 6 0 0 1 10 2.500M14 7A6 6 0 0 1 6 13.500" fill="none" stroke="#86c840" strokeWidth="2.600" /><path d="M9 0L14 3L9.500 6ZM7 10L2 13L7 16Z" fill="#86c840" /></I>
                  <I s={16} v={16}><path d="M16 1L10 6" stroke="#888" /><path d="M5 6L10 4L12 7L9 12L3 16L0 14Z" fill="#2c66c0" /><path d="M5 6L8 5L4 13L1 14Z" fill="#5b94e0" /></I>
                  <I s={16} v={16}><path d="M1 2H15L10 9V15H7V9Z" fill="#8d9498" /><ellipse cx="8" cy="2.500" rx="7" ry="1.800" fill="#6d9cb8" /><path d="M7.500 5V15" stroke="#d8dcde" /></I>
                  <I s={16} v={16}><path d="M8 0L13 5H10V11H13L8 16L3 11H6V5H3Z" fill="#3c8a12" /></I>
                </FootBar>
              </ListCol>
              <PreviewCol>
                <Preview />
                <FootBar $pr={9}>
                  <Count $bg="#ffcc66">0</Count><Slash>/</Slash><Count $bg="#ffff00">0</Count>
                  <Shortcuts><Elephant s={18} bg="#35b335" r={0} /><MBadge>M</MBadge></Shortcuts>
                </FootBar>
              </PreviewCol>
            </Split>
          </Main>
        </Body>
      </Window>
      <Taskbar>
        <TaskLeft>
          <TaskBtn $w={48}><I s={16} v={16}><path d="M0 2.300L6.500 1.400V7.600H0ZM7.300 1.300L16 0V7.600H7.300ZM0 8.400H6.500V14.600L0 13.700ZM7.300 8.400H16V16L7.300 14.700Z" fill="#fff" /></I></TaskBtn>
          <TaskBtn $w={48}><I s={16} v={16}><circle cx="8" cy="8" r="6.800" fill="none" stroke="#f4f4f4" strokeWidth="2" /></I></TaskBtn>
          <TaskBtn $w={48}><I s={16} v={16}><path d="M.5 0V2.500H10.500V0M.5 16V13.500H10.500V16M.5 5H10.500V11H.5ZM14 0V3M14 8V16" fill="none" stroke="#f4f4f4" /><rect x="12.500" y="4" width="3" height="3" fill="#fff" /></I></TaskBtn>
          <TaskBtn $w={48} $ml={3} $on><Logo w={24} h={24} /><Running $l={0} $w={48} /></TaskBtn>
          <TaskBtn $w={49}><svg width="22" height="19" viewBox="0 0 22 19"><path d="M0 1H8L10 3H22V18H0Z" fill="#f0c44a" /><path d="M0 5H22V18H0Z" fill="#fde494" /><path d="M4 18V11H18V18H14V15H8V18Z" fill="#39a7e4" /></svg></TaskBtn>
          <TaskBtn $w={49}><Pinwheel s={24} /><Running $l={5} $w={40} /></TaskBtn>
          <TaskBtn $w={49}><svg width="24" height="24" viewBox="0 0 24 24"><path d="M18 0L24 3V21L18 24L0 9L3 6L18 18Z" fill="#1173b8" /><path d="M18 0L24 3V21L18 24L16 22V6L3 18L0 15Z" fill="#2b9ff0" /><path d="M18 7V17L11 12Z" fill="#0c180c" /></svg><Running $l={5} $w={40} /></TaskBtn>
          <TaskBtn $w={49}><I s={24} v={24}><circle cx="12" cy="12" r="12" fill="#2b2e3b" /><g fill="none" stroke="#a7e0e8" strokeWidth=".9">{[0, 60, 120].map((a) => <ellipse key={a} cx="12" cy="12" rx="7.500" ry="2.900" transform={`rotate(${a} 12 12)`} />)}</g><circle cx="12" cy="12" r="1" fill="#a7e0e8" /></I><Running $l={5} $w={32} /><Running $l={37} $w={8} $dim /></TaskBtn>
        </TaskLeft>
        <Tray>
          <TwoLines $w={84}>34℃<br />CPU温度</TwoLines>
          <TrayItem $w={48}><I s={16} v={16}><g fill="none" stroke="#fff" strokeWidth="1.200"><circle cx="11" cy="4" r="2.800" /><circle cx="5" cy="8" r="2.500" /><path d="M1 15C1 9.500 9 9.500 9 15M8 9C10 6 15 7 15 12" /></g></I></TrayItem>
          <TrayItem $w={24}><svg width="12" height="7" viewBox="0 0 12 7"><path d="M.5 6.500L6 1L11.500 6.500" fill="none" stroke="#fff" strokeWidth="1.300" /></svg></TrayItem>
          <TrayItem $w={24}><I s={16} v={16}><path d="M1 2L15 .5V15H1Z" fill="none" stroke="#fff" /><path d="M4 8A4 4 0 0 1 11 5M11 8A4 4 0 0 1 5 11" fill="none" stroke="#fff" strokeWidth="1.300" /><circle cx="12" cy="12" r="4.300" fill="#e01f30" /><path d="M12 9.500V12.500M12 13.500V14.500" stroke="#fff" /></I></TrayItem>
          <TrayItem $w={24}><I s={16} v={16}><circle cx="8" cy="8" r="7.800" fill="#f6d800" /><path d="M1 5A7.500 7.500 0 0 1 13 2" fill="none" stroke="#3aa52a" strokeWidth="2" /><path d="M8 4V12M4 8H12" stroke="#1f8a24" strokeWidth="2" /></I></TrayItem>
          <TrayItem $w={24}><I s={16} v={16}><path d="M4 3.500H15.500V11.500H4M10 12V15M6 15.500H14M.5 2.500H4.500V6.500H.5ZM2.500 7V14" fill="none" stroke="#fff" /></I></TrayItem>
          <TrayItem $w={24}><I s={16} v={16}><path d="M.5 5.500H3.500L7 2V14L3.500 10.500H.5Z" fill="none" stroke="#fff" /><path d="M9 6C10 7 10 9 9 10" fill="none" stroke="#fff" /><path d="M11.500 4.500C13.500 6 13.500 10 11.500 11.500M13.500 2.500C17 5 17 11 13.500 13.500" fill="none" stroke="#8a928a" /></I></TrayItem>
          <TrayItem $w={36}>ENG</TrayItem>
          <TwoLines $w={112} $ls={0.15}>02:40<br />2020/5/2 星期六</TwoLines>
          <TrayItem $w={41}><I s={16} v={16}><path d="M.5 1H15.500V12.500H10.500L8 15.500V12.500H.5Z" fill="none" stroke="#fff" strokeWidth="1.200" /></I></TrayItem>
          <PeekEdge />
        </Tray>
      </Taskbar>
    </Screen>
  );
}
